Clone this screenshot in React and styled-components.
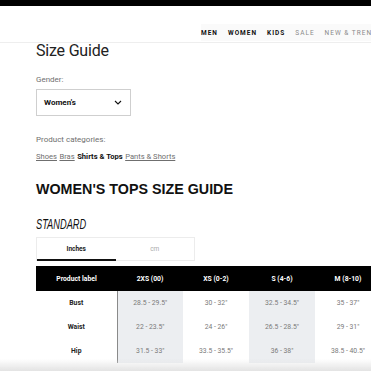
import React from "react";
import styled, { createGlobalStyle } from "styled-components";

const Global = createGlobalStyle`
  html, body { margin: 0; padding: 0; background: #fff; }
  body { font-family: Roboto, "Liberation Sans", sans-serif; color: #111; }
`;

const Page = styled.div`
  width: 100vw;
  height: 100vh;
  overflow: hidden;
  position: relative;
`;

const TopBar = styled.div`
  height: 6px;
  background: #000;
`;

const Header = styled.header`
  height: 37px;
  border-bottom: 1px solid #eeeeee;
  display: flex;
  align-items: flex-end;
  padding-left: 201px;
  padding-bottom: 1px;
  box-sizing: border-box;
  white-space: nowrap;
  overflow: hidden;
`;

const Nav = styled.nav`
  display: flex;
  gap: 10px;
  background: #fafafa;
  padding: 5px 0 4px;
`;

const NavItem = styled.span`
  font-family: Roboto, "Liberation Sans", sans-serif;
  font-size: 6.5px;
  font-weight: ${(p) => (p.$muted ? 400 : 700)};
  letter-spacing: 1px;
  color: ${(p) => (p.$muted ? "#8a8a8a" : "#111")};
`;

const Main = styled.main`
  padding-left: 36px;
  display: flex;
  flex-direction: column;
  align-items: flex-start;
`;

const Title = styled.h1`
  margin: 0;
  font-family: Roboto, "Liberation Sans", sans-serif;
  font-weight: 400;
  font-size: 16px;
  line-height: 16px;
  letter-spacing: -0.2px;
  color: #222;
`;

const SmallLabel = styled.div`
  font-size: 8px;
  line-height: 10px;
  color: #6f6f6f;
  margin-top: ${(p) => p.$mt}px;
`;

const Select = styled.div`
  margin-top: 4px;
  width: 95px;
  height: 27px;
  box-sizing: border-box;
  border: 1px solid #cfcfcf;
  display: flex;
  align-items: center;
  justify-content: space-between;
  padding: 0 8px 0 7px;
  font-size: 8px;
  font-weight: 700;
  color: #111;
`;

const Links = styled.div`
  margin-top: 7px;
  display: flex;
  gap: 2.5px;
  font-size: 7.6px;
  line-height: 10px;
  white-space: nowrap;
`;

const CatLink = styled.span`
  color: ${(p) => (p.$active ? "#111" : "#6f6f6f")};
  font-weight: ${(p) => (p.$active ? 700 : 400)};
  text-decoration: ${(p) => (p.$active ? "none" : "underline")};
`;

const Heading = styled.h2`
  margin: 19px 0 0;
  font-family: "Liberation Sans", Arial, sans-serif;
  font-weight: 700;
  font-size: 14.3px;
  line-height: 16px;
  color: #111;
  white-space: nowrap;
`;

const Sub = styled.h3`
  margin: 20px 0 0;
  font-family: "Liberation Sans", Arial, sans-serif;
  font-style: italic;
  font-weight: 400;
  font-size: 14px;
  line-height: 14px;
  color: #111;
  transform: scaleX(0.66);
  transform-origin: left center;
  white-space: nowrap;
`;

const Tabs = styled.div`
  margin-top: 6px;
  display: flex;
  width: 159px;
  height: 24px;
  box-sizing: border-box;
  border: 1px solid #ececec;
`;

const Tab = styled.div`
  flex: 1;
  display: flex;
  align-items: center;
  justify-content: center;
  font-size: 6.5px;
  font-weight: ${(p) => (p.$active ? 700 : 400)};
  color: ${(p) => (p.$active ? "#222" : "#aaa")};
  border-bottom: 2px solid ${(p) => (p.$active ? "#111" : "transparent")};
  margin-bottom: -1px;
`;

const Table = styled.table`
  margin-top: 5px;
  border-collapse: collapse;
  table-layout: fixed;
  width: 345px;
  font-size: 6.8px;
`;

const Th = styled.th`
  background: #000;
  color: #fff;
  font-weight: 700;
  height: 25px;
  padding: 0;
  width: ${(p) => p.$w}px;
  text-align: center;
  white-space: nowrap;
`;

const RowLabel = styled.td`
  height: 24px;
  padding: 0;
  text-align: center;
  font-weight: 700;
  color: #222;
`;

const Cell = styled.td`
  height: 24px;
  padding: 0;
  text-align: center;
  color: #7a7a7a;
  background: ${(p) => (p.$shade ? "#eceef1" : "transparent")};
  border-left: ${(p) => (p.$first ? "1px solid #8a8a8a" : "none")};
  white-space: nowrap;
`;

const BottomFade = styled.div`
  position: fixed;
  left: 0;
  right: 0;
  bottom: 0;
  height: 12px;
  background: linear-gradient(to bottom, rgba(235, 235, 235, 0), #e3e3e3);
  pointer-events: none;
`;

const Chevron = () => (
  <svg width="8" height="5" viewBox="0 0 8 5" fill="none">
    <path d="M1 1l3 3 3-3" stroke="#111" strokeWidth="1.1" />
  </svg>
);

const sizes = ["2XS (00)", "XS (0-2)", "S (4-6)", "M (8-10)"];
const rows = [
  ["Bust", ["28.5 - 29.5\"", "30 - 32\"", "32.5 - 34.5\"", "35 - 37\""]],
  ["Waist", ["22 - 23.5\"", "24 - 26\"", "26.5 - 28.5\"", "29 - 31\""]],
  ["Hip", ["31.5 - 33\"", "33.5 - 35.5\"", "36 - 38\"", "38.5 - 40.5\""]],
];

export default function App() {
  return (
    <Page>
      <Global />
      <TopBar />
      <Header>
        <Nav>
          <NavItem>MEN</NavItem>
          <NavItem>WOMEN</NavItem>
          <NavItem>KIDS</NavItem>
          <NavItem $muted>SALE</NavItem>
          <NavItem $muted>NEW &amp; TRENDING</NavItem>
        </Nav>
      </Header>
      <Main>
        <Title>Size Guide</Title>
        <SmallLabel $mt={16}>Gender:</SmallLabel>
        <Select>
          <span>Women's</span>
          <Chevron />
        </Select>
        <SmallLabel $mt={19}>Product categories:</SmallLabel>
        <Links>
          <CatLink>Shoes</CatLink>
          <CatLink>Bras</CatLink>
          <CatLink $active>Shirts &amp; Tops</CatLink>
          <CatLink>Pants &amp; Shorts</CatLink>
        </Links>
        <Heading>WOMEN'S TOPS SIZE GUIDE</Heading>
        <Sub>STANDARD</Sub>
        <Tabs>
          <Tab $active>Inches</Tab>
          <Tab>cm</Tab>
        </Tabs>
        <Table>
          <thead>
            <tr>
              <Th $w={81}>Product label</Th>
              {sizes.map((s) => (
                <Th key={s} $w={66}>{s}</Th>
              ))}
            </tr>
          </thead>
          <tbody>
            {rows.map(([label, vals]) => (
              <tr key={label}>
                <RowLabel>{label}</RowLabel>
                {vals.map((v, i) => (
                  <Cell key={i} $first={i === 0} $shade={i % 2 === 0}>{v}</Cell>
                ))}
              </tr>
            ))}
          </tbody>
        </Table>
      </Main>
      <BottomFade />
    </Page>
  );
}
